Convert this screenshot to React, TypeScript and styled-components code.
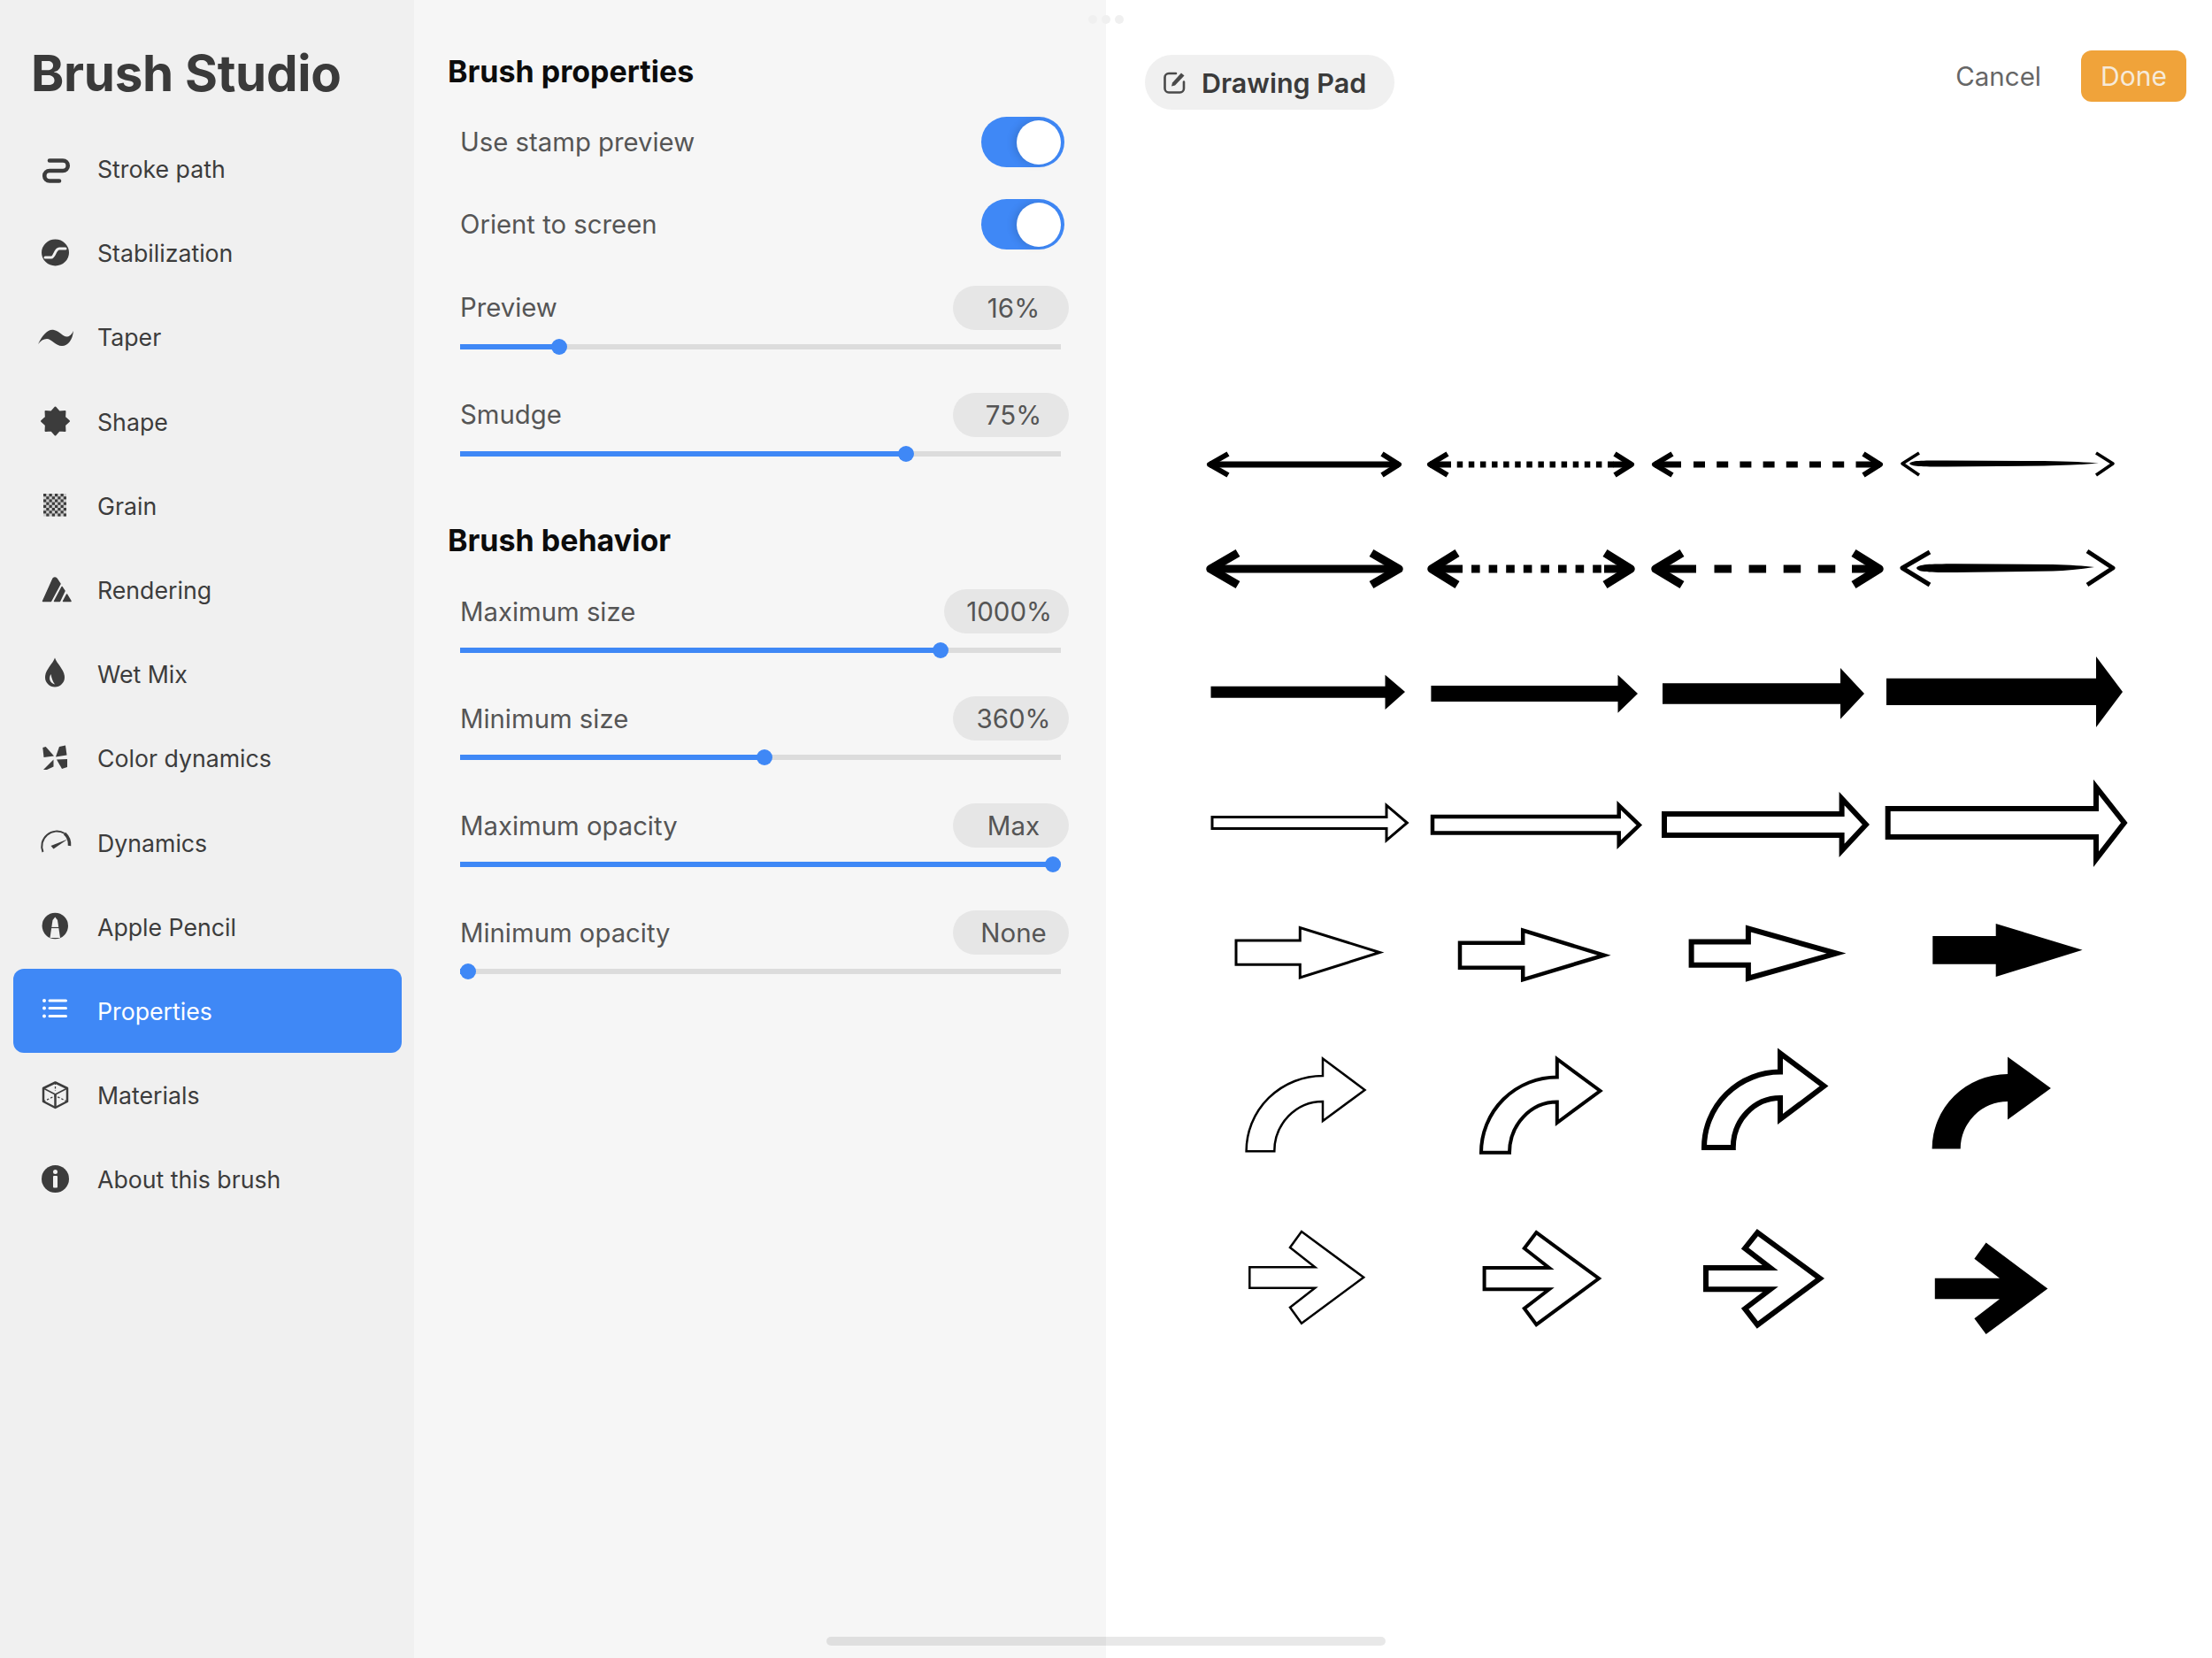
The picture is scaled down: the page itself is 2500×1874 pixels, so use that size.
import React from "react";
import styled, { createGlobalStyle } from "styled-components";

const Global = createGlobalStyle`
  html, body { margin: 0; padding: 0; background: #fff; }
  body { font-family: Inter, "Noto Sans", "Liberation Sans", sans-serif; }
  * { box-sizing: border-box; }
`;

const Page = styled.div`
  position: relative;
  width: 2500px;
  height: 1874px;
  display: flex;
  overflow: hidden;
`;

/* ---------- sidebar ---------- */
const Sidebar = styled.aside`
  width: 468px;
  flex: none;
  background: #f0f0f0;
  padding: 48px 14px 0 15px;
`;
const Title = styled.h1`
  margin: 0 0 23px 20px;
  height: 72px;
  line-height: 70px;
  font-size: 56.5px;
  font-weight: 700;
  color: #3a3a3a;
  letter-spacing: -0.3px;
  white-space: nowrap;
`;
const NavList = styled.nav`
  display: flex;
  flex-direction: column;
`;
const NavRow = styled.div<{ $active?: boolean }>`
  height: 95.2px;
  display: flex;
  align-items: center;
  gap: 28px;
  padding-left: 27px;
  border-radius: 12px;
  font-size: 26.7px;
  white-space: nowrap;
  background: ${(p) => (p.$active ? "#3f88f6" : "transparent")};
  color: ${(p) => (p.$active ? "#ffffff" : "#3c3c3c")};
`;
const NavText = styled.span`
  padding-top: 1px;
`;
const IconBox = styled.svg`
  width: 40px;
  height: 40px;
  flex: none;
  overflow: visible;
  display: block;
`;

/* ---------- panel ---------- */
const Panel = styled.section`
  width: 782px;
  flex: none;
  background: #f6f6f6;
  padding: 61px 0 0 38px;
`;
const SectionTitle = styled.h2<{ $gap: number; $top?: number }>`
  margin: ${(p) => p.$top ?? 0}px 0 ${(p) => p.$gap}px 0;
  height: 40px;
  line-height: 40px;
  font-size: 34px;
  font-weight: 700;
  color: #0c0c0c;
  white-space: nowrap;
`;
const Group = styled.div<{ $gap: number; $top?: number }>`
  display: flex;
  flex-direction: column;
  gap: ${(p) => p.$gap}px;
  margin: ${(p) => p.$top ?? 0}px 0 0 14px;
  width: 688px;
`;
const ToggleRow = styled.div`
  display: flex;
  align-items: center;
  justify-content: space-between;
  padding-right: 5px;
  height: 57px;
`;
const Label = styled.span`
  font-size: 29.3px;
  color: #555555;
  white-space: nowrap;
`;
const Toggle = styled.div`
  width: 94px;
  height: 57px;
  border-radius: 29px;
  background: #3f88f6;
  display: flex;
  align-items: center;
  justify-content: flex-end;
  padding-right: 4px;
`;
const Knob = styled.div`
  width: 50px;
  height: 50px;
  border-radius: 50%;
  background: #fff;
  box-shadow: -4px 0 8px rgba(0, 0, 0, 0.12);
`;
const SliderBlock = styled.div`
  display: flex;
  flex-direction: column;
`;
const SliderHead = styled.div`
  display: flex;
  align-items: center;
  justify-content: space-between;
  height: 50px;
`;
const Pill = styled.span`
  min-width: 131px;
  height: 50px;
  padding: 0 19px 0 25px;
  border-radius: 25px;
  background: #e6e6e6;
  color: #555555;
  font-size: 29.5px;
  display: flex;
  align-items: center;
  justify-content: center;
  white-space: nowrap;
`;
const Track = styled.div`
  position: relative;
  width: 679px;
  height: 6px;
  margin: 16px 0 0 0;
  background: #dcdcdc;
`;
const Fill = styled.div`
  position: relative;
  height: 100%;
  background: #3f88f6;
`;
const Thumb = styled.div`
  position: absolute;
  right: -9px;
  top: -6px;
  width: 18px;
  height: 18px;
  border-radius: 50%;
  background: #3f88f6;
`;

/* ---------- canvas ---------- */
const Canvas = styled.main`
  flex: 1;
  min-width: 0;
  background: #fff;
  display: flex;
  flex-direction: column;
`;
const Header = styled.header`
  height: 130px;
  flex: none;
  display: flex;
  align-items: flex-start;
  justify-content: space-between;
  padding: 57px 29px 0 44px;
`;
const PadChip = styled.div`
  margin-top: 5px;
  width: 282px;
  height: 62px;
  border-radius: 31px;
  background: #f0f0f0;
  display: flex;
  align-items: center;
  gap: 16px;
  padding-left: 20px;
  font-size: 30.5px;
  font-weight: 600;
  color: #3a3a3a;
  white-space: nowrap;
`;
const Actions = styled.div`
  display: flex;
  align-items: center;
  gap: 45px;
`;
const Cancel = styled.span`
  font-size: 29.5px;
  color: #666666;
`;
const Done = styled.span`
  width: 119px;
  height: 58px;
  border-radius: 12px;
  background: #f0a33a;
  color: #f6ead9;
  font-size: 30px;
  display: flex;
  align-items: center;
  justify-content: center;
`;
const Drawing = styled.svg`
  display: block;
  width: 1250px;
  height: 1744px;
  flex: none;
`;
const EditGlyph = styled.svg`
  flex: none;
  display: block;
`;

/* ---------- overlays ---------- */
const Grabber = styled.div`
  position: absolute;
  left: 1230px;
  top: 17px;
  display: flex;
  gap: 5px;
`;
const GrabDot = styled.span`
  width: 10px;
  height: 10px;
  border-radius: 50%;
  background: #f0f0f0;
`;
const HomeBar = styled.div`
  position: absolute;
  left: 934px;
  top: 1850px;
  width: 632px;
  height: 10px;
  border-radius: 5px;
  background: rgba(0, 0, 0, 0.09);
`;

/* ---------- sidebar icons ---------- */
const DARK = "#3c3c3c";
const starPoints = (cx: number, cy: number, R: number, r: number, n: number) =>
  Array.from({ length: n * 2 }, (_, i) => {
    const a = (Math.PI * i) / n - Math.PI / 2;
    const q = i % 2 ? r : R;
    return `${(cx + q * Math.cos(a)).toFixed(2)},${(cy + q * Math.sin(a)).toFixed(2)}`;
  }).join(" ");

const IconStroke = () => (
  <IconBox viewBox="0 0 40 40">
    <path d="M14 10.5H29a5.75 5.75 0 0 1 0 11.5H14a5.75 5.75 0 0 0 0 11.5H25" fill="none" stroke={DARK} strokeWidth="4.6" strokeLinecap="round" />
  </IconBox>
);
const IconStab = () => (
  <IconBox viewBox="0 0 40 40">
    <ellipse cx="20.5" cy="19.5" rx="15.5" ry="15" fill={DARK} />
    <path d="M9 25H16C20 25 20 15 25 15H32" fill="none" stroke="#f0f0f0" strokeWidth="3" strokeLinecap="round" />
  </IconBox>
);
const IconTaper = () => (
  <IconBox viewBox="0 0 40 40">
    <path d="M1 28C6 18 12 10.500 19 12C26 13.500 29 20 34 19.500C38 19 40 15 41 13C40 23 35 30 28 30C21 30 16 22 11 22C7 22 4 24 1 28Z" fill={DARK} />
  </IconBox>
);
const IconShape = () => (
  <IconBox viewBox="0 0 40 40">
    <polygon points={starPoints(20.5, 20, 15.5, 11.5, 8)} fill={DARK} stroke={DARK} strokeWidth="2" strokeLinejoin="round" />
  </IconBox>
);
const IconGrain = () => (
  <IconBox viewBox="0 0 40 40">
    {Array.from({ length: 64 }, (_, i) => {
      const c = i % 8;
      const r = Math.floor(i / 8);
      return (c + r) % 2 === 0 ? <rect key={i} x={7 + c * 3.25} y={7 + r * 3.2} width="3.25" height="3.2" fill={DARK} /> : null;
    })}
    <rect x="7" y="7" width="26" height="25.6" fill={DARK} opacity="0.18" />
  </IconBox>
);
const IconRendering = () => (
  <IconBox viewBox="0 0 40 40">
    <g fill={DARK} stroke={DARK} strokeWidth="1.5" strokeLinejoin="round">
      <path d="M6.500 32.500L18 7Q20 5 22 7L26 13L15.500 32.500Z" />
      <path d="M19.500 32.500L28 16.500L31 21L25.500 32.500Z" />
      <path d="M29.500 32.500L33.500 25L38 32.500Z" />
    </g>
  </IconBox>
);
const IconDrop = () => (
  <IconBox viewBox="0 0 40 40">
    <path d="M20 1.500C22 8 31 15 31 23.500A11 11 0 0 1 9 23.500C9 15 18 8 20 1.500Z" fill={DARK} />
    <path d="M15.500 20C12.500 25 14.500 30 20 31.500C17.500 28 16.500 25 15.500 20Z" fill="#f0f0f0" />
  </IconBox>
);
const IconPinwheel = () => (
  <IconBox viewBox="0 0 40 40">
    <g fill={DARK}>
      <polygon points="6.3,8 9.7,7 19,17.5 7.5,19" />
      <polygon points="21,18.5 25,7 32,5.5 33.5,16.5" />
      <polygon points="22,21.5 34,21 34,30 28,32" />
      <polygon points="18.5,21.5 18.5,29.5 11,33 7,33" />
    </g>
  </IconBox>
);
const IconGauge = () => (
  <IconBox viewBox="0 0 40 40">
    <path d="M6.500 31A17 17 0 0 1 31 10" fill="none" stroke={DARK} strokeWidth="2" />
    <path d="M31 10A17 17 0 0 1 36.500 24" fill="none" stroke={DARK} strokeWidth="3.500" />
    <polygon points="15.500,24 18.500,27.500 34.500,16.500" fill={DARK} />
  </IconBox>
);
const IconPencil = () => (
  <IconBox viewBox="0 0 40 40">
    <circle cx="20.3" cy="19.5" r="14.7" fill={DARK} />
    <path d="M20.300 9.500L23 13L26 33H14.500L17.500 13Z" fill="#f0f0f0" />
    <path d="M15.500 21.500H25" stroke={DARK} strokeWidth="1.2" />
  </IconBox>
);
const IconList = () => (
  <IconBox viewBox="0 0 40 40">
    <g stroke="#fff" strokeWidth="3" strokeLinecap="round">
      <path d="M14 9H32.500M14 17.600H32.500M14 26.400H32.500" />
    </g>
    <g fill="#fff">
      <circle cx="8" cy="9" r="2" />
      <circle cx="8" cy="17.6" r="2" />
      <circle cx="8" cy="26.4" r="2" />
    </g>
  </IconBox>
);
const IconCube = () => (
  <IconBox viewBox="0 0 40 40">
    <g fill="none" stroke={DARK} strokeWidth="2.5" strokeLinejoin="round">
      <path d="M20.500 5.500L34 12V27L20.500 34L7 27V12Z" />
      <path d="M7 12L20.500 19L34 12" strokeWidth="1.5" />
      <path d="M20.500 19V34" strokeWidth="2.5" />
      <path d="M7 27L20.500 20.500L34 27M20.500 5.500V15" strokeWidth="1.3" strokeDasharray="2.5 2" />
    </g>
  </IconBox>
);
const IconInfo = () => (
  <IconBox viewBox="0 0 40 40">
    <circle cx="20.5" cy="19.5" r="15.5" fill={DARK} />
    <circle cx="20.5" cy="11.5" r="2.5" fill="#f0f0f0" />
    <rect x="18" y="16" width="5" height="13.5" rx="1" fill="#f0f0f0" />
  </IconBox>
);
const IconEdit = () => (
  <EditGlyph width="28" height="28" viewBox="0 0 28 28" fill="none">
    <path d="M24 13.500V21A4.500 4.500 0 0 1 19.500 25.500H7A4.500 4.500 0 0 1 2.500 21V8.500A4.500 4.500 0 0 1 7 4H15" stroke="#4a4a4a" strokeWidth="2.6" strokeLinecap="round" />
    <path d="M10 18.500L11 14.500L21 3.500L24.500 6.500L14 17.500Z" fill="#4a4a4a" />
  </EditGlyph>
);

const NAV: [string, () => React.ReactElement][] = [
  ["Stroke path", IconStroke],
  ["Stabilization", IconStab],
  ["Taper", IconTaper],
  ["Shape", IconShape],
  ["Grain", IconGrain],
  ["Rendering", IconRendering],
  ["Wet Mix", IconDrop],
  ["Color dynamics", IconPinwheel],
  ["Dynamics", IconGauge],
  ["Apple Pencil", IconPencil],
  ["Properties", IconList],
  ["Materials", IconCube],
  ["About this brush", IconInfo],
];

/* ---------- arrow drawing ---------- */
type Pt = [number, number];
const inset = (pts: Pt[], d: number): Pt[] =>
  pts.map((p, i) => {
    const a = pts[(i + pts.length - 1) % pts.length];
    const b = pts[(i + 1) % pts.length];
    const n = (u: Pt, v: Pt): Pt => {
      const dx = v[0] - u[0];
      const dy = v[1] - u[1];
      const l = Math.hypot(dx, dy);
      return [-dy / l, dx / l];
    };
    const n1 = n(a, p);
    const n2 = n(p, b);
    const k = d / (1 + n1[0] * n2[0] + n1[1] * n2[1]);
    return [p[0] + (n1[0] + n2[0]) * k, p[1] + (n1[1] + n2[1]) * k];
  });
const str = (pts: Pt[]) => pts.map((p) => `${p[0].toFixed(1)},${p[1].toFixed(1)}`).join(" ");
const Shape = ({ pts, s }: { pts: Pt[]; s: number }) =>
  s === 0 ? (
    <polygon points={str(pts)} fill="#000" />
  ) : (
    <polygon points={str(inset(pts, s / 2))} fill="#fff" stroke="#000" strokeWidth={s} strokeMiterlimit={30} />
  );
const straight = (x: number, base: number, tip: number, bt: number, bb: number, ht: number, hb: number, ty: number): Pt[] => [
  [x, bt],
  [base, bt],
  [base, ht],
  [tip, ty],
  [base, hb],
  [base, bb],
  [x, bb],
];
const chevron = (x: number, bt: number, bb: number, j: number, nx: number, nu: number, tx: number, tu: number, tipx: number, tipy: number, bo: number, nl: number): Pt[] => [
  [x, bt],
  [j, bt],
  [nx, nu],
  [tx, tu],
  [tipx, tipy],
  [tx, bo],
  [nx, nl],
  [j, bb],
  [x, bb],
];

const STRAIGHT: { a: number[]; s: number }[] = [
  { a: [1368.5, 1565.5, 1588, 775.7, 788.7, 762.7, 802, 782], s: 0 },
  { a: [1617.4, 1828.5, 1851, 775, 793, 762.7, 805.7, 784], s: 0 },
  { a: [1879, 2080, 2107, 772.3, 795.7, 755, 812.7, 784], s: 0 },
  { a: [2132, 2369, 2399, 766.7, 797, 742, 822, 782], s: 0 },
  { a: [1368.5, 1565.5, 1592.6, 922, 938, 907, 953, 930], s: 3 },
  { a: [1616.7, 1827.4, 1856, 920.7, 943.7, 905, 960, 932.6], s: 4.5 },
  { a: [1878, 2078.6, 2113, 917, 947, 895, 969, 932], s: 6 },
  { a: [2130.7, 2366, 2404.6, 911, 949, 881, 980, 930], s: 6 },
  { a: [1395.5, 1467.8, 1564.4, 1061.4, 1091.7, 1046.5, 1107, 1076.5], s: 3 },
  { a: [1647.8, 1718.9, 1820.7, 1063.4, 1095.9, 1048.6, 1110.3, 1079.7], s: 4.5 },
  { a: [1908.6, 1972.9, 2086.4, 1061.4, 1093.8, 1045.5, 1109.7, 1077.6], s: 6 },
  { a: [2184.3, 2255.7, 2353.6, 1057.9, 1089.7, 1044, 1104, 1073.8], s: 0 },
];
const CHEVRONS: { a: number[]; s: number }[] = [
  { a: [1411, 1431, 1457, 1482.6, 1456.3, 1410.3, 1470.7, 1390.3, 1543.3, 1443.8, 1497.6, 1477.6], s: 2.5 },
  { a: [1675.6, 1431, 1459.3, 1745, 1720, 1411.4, 1736, 1390.3, 1810.4, 1445, 1500, 1478.6], s: 4 },
  { a: [1925, 1430, 1460.3, 1992, 1967.9, 1411.4, 1985.7, 1389, 2062, 1445, 1501.7, 1478.6], s: 6 },
  { a: [2186.8, 1444.8, 1468.3, 2260, 2231.4, 1422.8, 2244.6, 1404.5, 2314.3, 1456.6, 1508, 1490.3], s: 0 },
];
const curved = (L: number, R: number, B: number, xa: number, top: number, ht: number, tx: number, ty: number, hb: number, inner: number) =>
  `M${L} ${B}A${xa - L} ${B - top} 0 0 1 ${xa} ${top}V${ht}L${tx} ${ty}L${xa} ${hb}V${inner}A${xa - R} ${B - inner} 0 0 0 ${R} ${B}Z`;

type Dash = { x1: number; x2: number; on: number; off: number; l2: number; r2: number };
const Barbed = ({ y, lx, ltip, rx, rtip, h, sw, lw, dash }: { y: number; lx: number; ltip: number; rx: number; rtip: number; h: number; sw: number; lw: number; dash: Dash | null }) => (
  <g fill="none" stroke="#000">
    <polyline points={`${lx},${y - h} ${ltip},${y} ${lx},${y + h}`} strokeWidth={sw} strokeLinejoin="round" />
    <polyline points={`${rx},${y - h} ${rtip},${y} ${rx},${y + h}`} strokeWidth={sw} strokeLinejoin="round" />
    {dash ? (
      <>
        <path d={`M${ltip} ${y}H${dash.l2}M${dash.r2} ${y}H${rtip}`} strokeWidth={lw} />
        <path d={`M${dash.x1} ${y}H${dash.x2}`} strokeWidth={lw} strokeDasharray={`${dash.on} ${dash.off}`} />
      </>
    ) : (
      <path d={`M${ltip} ${y}H${rtip}`} strokeWidth={lw} />
    )}
  </g>
);

const Arrows = () => (
  <Drawing viewBox="1250 130 1250 1744">
    <Barbed y={525} lx={1388} ltip={1367} rx={1562} rtip={1581} h={12} sw={6} lw={7} dash={null} />
    <Barbed y={525} lx={1636} ltip={1616} rx={1825} rtip={1844} h={12} sw={6} lw={7} dash={{ x1: 1646.7, x2: 1824, on: 6.5, off: 6.6, l2: 1640, r2: 1823 }} />
    <Barbed y={525} lx={1890} ltip={1870} rx={2106} rtip={2125} h={12} sw={6} lw={7} dash={{ x1: 1914, x2: 2085, on: 13, off: 13.2, l2: 1900, r2: 2097.5 }} />
    <Barbed y={643} lx={1399} ltip={1368} rx={1550} rtip={1581} h={18} sw={9.5} lw={9} dash={null} />
    <Barbed y={643} lx={1647} ltip={1618} rx={1814} rtip={1843} h={18} sw={9.5} lw={9} dash={{ x1: 1663, x2: 1811, on: 9.6, off: 10, l2: 1653, r2: 1813 }} />
    <Barbed y={643} lx={1901} ltip={1871} rx={2095} rtip={2124} h={18} sw={9.5} lw={9} dash={{ x1: 1937.5, x2: 2075, on: 19.5, off: 19.6, l2: 1917, r2: 2093 }} />
    <g fill="none" stroke="#000" strokeLinejoin="round">
      <polyline points="2169,512 2150,524 2169,537" strokeWidth="3.6" />
      <polyline points="2369,512 2388,524 2369,537" strokeWidth="3.6" />
      <polyline points="2181,624 2150,642 2181,661" strokeWidth="5" />
      <polyline points="2359,623 2388,642 2359,661" strokeWidth="5" />
    </g>
    <path d="M2158 524C2160 520.500 2170 520.500 2200 520.500L2310 521C2340 521.500 2360 522.500 2372 523.500C2350 525.500 2330 526 2310 526.500L2200 527.500C2170 527.500 2160 527 2158 524Z" fill="#000" />
    <path d="M2166 642C2168 637.500 2180 637.500 2210 637.200L2320 638C2340 638.500 2355 639.500 2367 641C2350 643.500 2335 645 2320 645.500L2210 647C2180 647 2168 647 2166 642Z" fill="#000" />
    {STRAIGHT.map(({ a, s }, i) => (
      <Shape key={i} pts={straight(a[0], a[1], a[2], a[3], a[4], a[5], a[6], a[7])} s={s} />
    ))}
    {CHEVRONS.map(({ a, s }, i) => (
      <Shape key={i} pts={chevron(a[0], a[1], a[2], a[3], a[4], a[5], a[6], a[7], a[8], a[9], a[10], a[11])} s={s} />
    ))}
    <g fill="#fff" stroke="#000" strokeMiterlimit={20}>
      <path d={curved(1408.6, 1440.3, 1301.2, 1495, 1216, 1196.5, 1542.5, 1232, 1267, 1245)} strokeWidth="2.5" />
      <path d={curved(1674, 1706, 1302.8, 1759.8, 1217.5, 1197, 1808.5, 1233, 1269, 1245.5)} strokeWidth="4" />
      <path d={curved(1926, 1958.8, 1297, 2012, 1211.6, 1190.5, 2061.5, 1227.6, 1265, 1241)} strokeWidth="6" />
    </g>
    <path d={curved(2183.6, 2215.7, 1298.6, 2269, 1214, 1194.5, 2317.9, 1230, 1265.5, 1245)} fill="#000" />
  </Drawing>
);

/* ---------- panel data ---------- */
const SliderRow = ({ label, value, at }: { label: string; value: string; at: number }) => (
  <SliderBlock>
    <SliderHead>
      <Label>{label}</Label>
      <Pill>{value}</Pill>
    </SliderHead>
    <Track>
      <Fill style={{ width: at }}>
        <Thumb />
      </Fill>
    </Track>
  </SliderBlock>
);

export default function App() {
  return (
    <Page>
      <Global />
      <Sidebar>
        <Title>Brush Studio</Title>
        <NavList>
          {NAV.map(([label, Icon]) => (
            <NavRow key={label} $active={label === "Properties"}>
              <Icon />
              <NavText>{label}</NavText>
            </NavRow>
          ))}
        </NavList>
      </Sidebar>
      <Panel>
        <SectionTitle $gap={31}>Brush properties</SectionTitle>
        <Group $gap={36}>
          <ToggleRow>
            <Label>Use stamp preview</Label>
            <Toggle>
              <Knob />
            </Toggle>
          </ToggleRow>
          <ToggleRow>
            <Label>Orient to screen</Label>
            <Toggle>
              <Knob />
            </Toggle>
          </ToggleRow>
        </Group>
        <Group $gap={49} $top={40.5}>
          <SliderRow label="Preview" value="16%" at={111.5} />
          <SliderRow label="Smudge" value="75%" at={503.5} />
        </Group>
        <SectionTitle $gap={35} $top={75.5}>
          Brush behavior
        </SectionTitle>
        <Group $gap={49}>
          <SliderRow label="Maximum size" value="1000%" at={542.5} />
          <SliderRow label="Minimum size" value="360%" at={343.5} />
          <SliderRow label="Maximum opacity" value="Max" at={669.5} />
          <SliderRow label="Minimum opacity" value="None" at={9.2} />
        </Group>
      </Panel>
      <Canvas>
        <Header>
          <PadChip>
            <IconEdit />
            Drawing Pad
          </PadChip>
          <Actions>
            <Cancel>Cancel</Cancel>
            <Done>Done</Done>
          </Actions>
        </Header>
        <Arrows />
      </Canvas>
      <Grabber>
        <GrabDot />
        <GrabDot />
        <GrabDot />
      </Grabber>
      <HomeBar />
    </Page>
  );
}
